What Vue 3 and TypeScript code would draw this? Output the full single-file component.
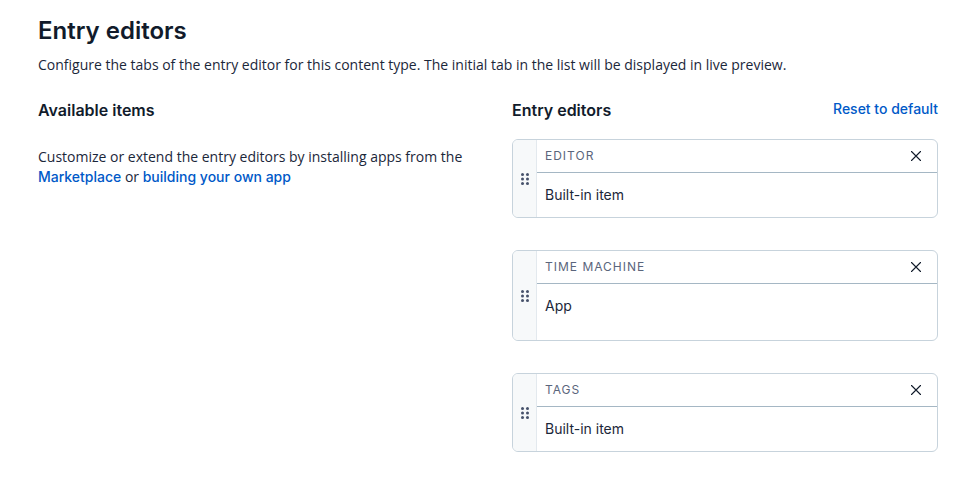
<script setup lang="ts">
import { ref } from 'vue'

interface EditorItem {
  id: string
  name: string
  kind: string
  isApp: boolean
}

const defaults: EditorItem[] = [
  { id: 'editor', name: 'Editor', kind: 'Built-in item', isApp: false },
  { id: 'time-machine', name: 'Time Machine', kind: 'App', isApp: true },
  { id: 'tags', name: 'Tags', kind: 'Built-in item', isApp: false },
]

const items = ref<EditorItem[]>([...defaults])

function remove(id: string): void {
  items.value = items.value.filter((item) => item.id !== id)
}

function reset(): void {
  items.value = [...defaults]
}
</script>

<template>
  <main class="page">
    <h1 class="title">Entry editors</h1>
    <p class="intro">
      Configure the tabs of the entry editor for this content type. The initial tab in the list will be displayed in live preview.
    </p>

    <div class="columns">
      <section>
        <h2 class="heading">Available items</h2>
        <p class="hint">
          Customize or extend the entry editors by installing apps from the
          <a class="link" href="#marketplace">Marketplace</a> or
          <a class="link" href="#build-app">building your own app</a>
        </p>
      </section>

      <section>
        <header class="section-head">
          <h2 class="heading">Entry editors</h2>
          <button class="link reset" type="button" @click="reset">Reset to default</button>
        </header>
        <ul class="list">
          <li v-for="item in items" :key="item.id" class="card">
            <button class="handle" type="button" aria-label="Reorder">
              <svg width="8" height="12" viewBox="0 0 8 12" fill="currentColor" aria-hidden="true">
                <circle cx="1.5" cy="1.5" r="1.5" />
                <circle cx="6.5" cy="1.5" r="1.5" />
                <circle cx="1.5" cy="6" r="1.5" />
                <circle cx="6.5" cy="6" r="1.5" />
                <circle cx="1.5" cy="10.5" r="1.5" />
                <circle cx="6.5" cy="10.5" r="1.5" />
              </svg>
            </button>
            <div class="content">
              <div class="card-head">
                <h3 class="name">{{ item.name }}</h3>
                <button class="close" type="button" aria-label="Remove" @click="remove(item.id)">
                  <svg width="12" height="12" viewBox="0 0 12 12" fill="none" stroke="currentColor" stroke-width="1.1" stroke-linecap="round" aria-hidden="true">
                    <path d="M1.5 1.5 10.5 10.5M10.5 1.5 1.5 10.5" />
                  </svg>
                </button>
              </div>
              <p class="kind" :class="{ app: item.isApp }">{{ item.kind }}</p>
            </div>
          </li>
        </ul>
      </section>
    </div>
  </main>
</template>

<style>
body {
  margin: 0;
  background: #fff;
}
</style>

<style scoped>
.page {
  padding: 15px 41px 40px 38px;
  font-family: Inter, "Liberation Sans", sans-serif;
  font-size: 14px;
  line-height: 20px;
  color: #1b273a;
}

h1,
h2,
h3,
p,
ul {
  margin: 0;
  padding: 0;
}

button {
  padding: 0;
  border: 0;
  background: none;
  font: inherit;
  cursor: pointer;
}

.title {
  font-size: 24px;
  line-height: 32px;
  font-weight: 600;
  color: #111b2b;
}

.intro,
.hint {
  font-family: "Open Sans", "Liberation Sans", sans-serif;
}

.intro {
  margin-top: 8px;
}

.columns {
  display: grid;
  grid-template-columns: 1fr 1fr;
  gap: 48px;
  margin-top: 24px;
}

.heading {
  font-size: 16px;
  line-height: 22px;
  font-weight: 600;
  color: #111b2b;
}

.hint {
  margin-top: 26px;
}

.link {
  font-family: Inter, "Liberation Sans", sans-serif;
  color: #0059c8;
  font-weight: 500;
  text-decoration: none;
}

.section-head {
  display: flex;
  justify-content: space-between;
  align-items: flex-start;
}

.list {
  display: grid;
  gap: 32px;
  margin-top: 18px;
  list-style: none;
}

.card {
  display: flex;
  border: 1px solid #c7d3dc;
  border-radius: 6px;
  overflow: hidden;
}

.handle {
  display: flex;
  align-items: center;
  justify-content: center;
  width: 24px;
  box-sizing: border-box;
  border-right: 1px solid #e3e9ee;
  background: #f7f9fa;
  color: #47526b;
  cursor: grab;
}

.content {
  flex: 1;
}

.card-head {
  display: flex;
  align-items: center;
  justify-content: space-between;
  padding: 6px 15px 6px 8px;
  border-bottom: 1px solid #a5b7c4;
}

.name {
  font-size: 12px;
  line-height: 20px;
  font-weight: 400;
  letter-spacing: 1px;
  text-transform: uppercase;
  color: #5a657c;
}

.close {
  display: flex;
  color: #111b2b;
}

.kind {
  padding: 12px 8px;
}

.app {
  padding-bottom: 24px;
}
</style>
